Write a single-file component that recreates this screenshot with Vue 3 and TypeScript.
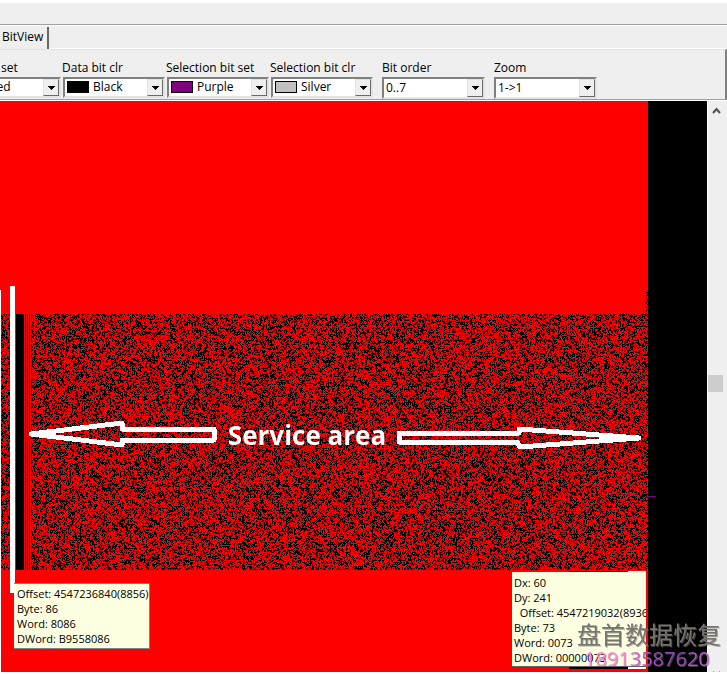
<script setup lang="ts">
import { onBeforeUnmount, onMounted, ref } from 'vue'

interface Picker {
  id: string
  label: string
  value: string
  swatch?: string
  options: string[]
}

const colours = ['Red', 'Black', 'Purple', 'Silver']

const colourPickers = ref<Picker[]>([
  { id: 'data-set', label: 'set', value: 'Red', swatch: '#ff0000', options: colours },
  { id: 'data-clr', label: 'Data bit clr', value: 'Black', swatch: '#000000', options: colours },
  { id: 'sel-set', label: 'Selection bit set', value: 'Purple', swatch: '#800080', options: colours },
  { id: 'sel-clr', label: 'Selection bit clr', value: 'Silver', swatch: '#c0c0c0', options: colours },
])

const viewPickers = ref<Picker[]>([
  { id: 'order', label: 'Bit order', value: '0..7', options: ['0..7', '7..0'] },
  { id: 'zoom', label: 'Zoom', value: '1->1', options: ['1->1', '1->2', '1->4'] },
])

const leftTip = ['Offset: 4547236840(8856)', 'Byte: 86', 'Word: 8086', 'DWord: B9558086']
const rightTip = ['Dx: 60', 'Dy: 241', '  Offset: 4547219032(8936', 'Byte: 73', 'Word: 0073', 'DWord: 00000073']

const bitmap = ref<HTMLCanvasElement | null>(null)

const MARGIN = 59
const DATA_TOP = 213
const DATA_BOTTOM = 469

function randomBits(seed: number): () => number {
  let s = seed
  return () => {
    s = (s + 0x6d2b79f5) | 0
    let t = Math.imul(s ^ (s >>> 15), 1 | s)
    t = (t + Math.imul(t ^ (t >>> 7), 61 | t)) ^ t
    return ((t ^ (t >>> 14)) >>> 0) / 4294967296
  }
}

function draw(): void {
  const el = bitmap.value
  if (!el) return
  const w = el.clientWidth
  const h = el.clientHeight
  el.width = w
  el.height = h
  const ctx = el.getContext('2d')
  if (!ctx) return
  const edge = w - MARGIN
  ctx.fillStyle = '#ff0000'
  ctx.fillRect(0, 0, edge, h)
  ctx.fillStyle = '#000000'
  ctx.fillRect(edge, 0, MARGIN, h)

  const next = randomBits(8856)
  for (let y = DATA_TOP; y < DATA_BOTTOM; y++) {
    for (let x = 1; x < edge; x++) {
      if (x >= 10 && x < 31) continue
      if (next() < 0.48) ctx.fillRect(x, y, 1, 1)
    }
  }
  // the record that starts just above the first full row
  for (let y = DATA_TOP - 22; y < DATA_TOP; y++) {
    for (let x = edge - 2; x < edge; x++) {
      if (next() < 0.55) ctx.fillRect(x, y, 1, 1)
    }
  }
  const rows = DATA_BOTTOM - DATA_TOP
  ctx.fillRect(16, DATA_TOP, 8, rows)
  for (const x of [25, 27, 29]) ctx.fillRect(x, DATA_TOP, 1, rows)
  ctx.fillStyle = '#800080'
  ctx.fillRect(edge, 395, 8, 1)
}

onMounted(() => {
  draw()
  window.addEventListener('resize', draw)
})
onBeforeUnmount(() => window.removeEventListener('resize', draw))
</script>

<template>
  <main class="window">
    <div class="strip"></div>
    <nav class="tabs"><button class="tab" type="button">BitView</button></nav>
    <section class="toolbar">
      <div class="colours">
        <div v-for="p in colourPickers" :key="p.id" class="field">
          <label :for="p.id">{{ p.label }}</label>
          <div class="combo">
            <span class="swatch" :style="{ background: p.swatch }"></span>
            <select :id="p.id" v-model="p.value" class="with-swatch">
              <option v-for="o in p.options" :key="o">{{ o }}</option>
            </select>
            <span class="drop"><svg width="7" height="4" viewBox="0 0 7 4" shape-rendering="crispEdges"><path d="M0 0h7v1h-1v1h-1v1h-1v1h-1v-1h-1v-1h-1v-1h-1z" /></svg></span>
          </div>
        </div>
      </div>
      <div v-for="p in viewPickers" :key="p.id" class="field wide">
        <label :for="p.id">{{ p.label }}</label>
        <div class="combo tall">
          <select :id="p.id" v-model="p.value">
            <option v-for="o in p.options" :key="o">{{ o }}</option>
          </select>
          <span class="drop"><svg width="7" height="4" viewBox="0 0 7 4" shape-rendering="crispEdges"><path d="M0 0h7v1h-1v1h-1v1h-1v1h-1v-1h-1v-1h-1v-1h-1z" /></svg></span>
        </div>
      </div>
    </section>
    <section class="workspace">
      <div class="view">
        <canvas ref="bitmap" class="bitmap"></canvas>
        <div class="edge"></div>
        <div class="marker"></div>
        <div class="callout">
          <svg width="190" height="32" viewBox="0 0 190 32" shape-rendering="crispEdges">
            <path d="M4 15L95 4V10H187V21H95V26Z" fill="none" stroke="#fff" stroke-width="5" stroke-linejoin="round" />
          </svg>
          <strong>Service area</strong>
          <svg width="248" height="32" viewBox="0 0 248 32" shape-rendering="crispEdges">
            <path d="M244 19L124 10V14H4V23H122L125 28Z" fill="none" stroke="#fff" stroke-width="5" stroke-linejoin="round" />
          </svg>
        </div>
        <div class="tip tip-left"><div v-for="t in leftTip" :key="t">{{ t }}</div></div>
        <div class="tip-frame">
          <div class="tip tip-right"><div v-for="t in rightTip" :key="t">{{ t }}</div></div>
        </div>
      </div>
      <div class="scrollbar">
        <button type="button" class="arrow" aria-label="Scroll up">
          <svg width="9" height="7" viewBox="0 0 9 7"><path d="M1 6L4.500 2L8 6" fill="none" stroke="#505050" stroke-width="2" /></svg>
        </button>
        <div class="thumb"></div>
        <button type="button" class="arrow down" aria-label="Scroll down">
          <svg width="9" height="7" viewBox="0 0 9 7"><path d="M1 1L4.500 5L8 1" fill="none" stroke="#505050" stroke-width="2" /></svg>
        </button>
      </div>
      <div class="watermark">
        <div class="brand">盘首数据恢复</div>
        <div class="phone">18913587620</div>
      </div>
    </section>
  </main>
</template>

<style>
body {
  margin: 0;
  background: #fff;
}
</style>

<style scoped>
.window {
  display: flex;
  flex-direction: column;
  height: 100vh;
  box-sizing: border-box;
  padding: 3px 0 2px;
  overflow: hidden;
  font-family: 'Open Sans', 'Noto Sans CJK SC', sans-serif;
  font-size: 12px;
  line-height: 15px;
  color: #000;
}
.strip {
  flex: none;
  height: 21px;
  background: #efefef;
  border-bottom: 1px solid #a0a0a0;
}
.tabs {
  flex: none;
  height: 22px;
  display: flex;
  background: #efefef;
  border-top: 1px solid #fff;
  border-bottom: 1px solid #fff;
}
.tab {
  box-sizing: border-box;
  width: 49px;
  height: 23px;
  margin: 1px 0 0;
  padding: 0 0 4px 2px;
  border: 0;
  border-right: 2px solid #696969;
  background: #efefef;
  font: inherit;
  text-align: left;
  white-space: nowrap;
}
.toolbar {
  flex: none;
  display: flex;
  gap: 9px;
  height: 51px;
  box-sizing: border-box;
  margin-bottom: 1px;
  padding-top: 10px;
  background: #efefef;
  border-top: 1px solid #e3e3e3;
  border-right: 2px solid #808080;
  border-bottom: 1px solid #a0a0a0;
  overflow: hidden;
}
.colours {
  display: flex;
  gap: 2px;
  margin-left: -41px;
}
.field {
  width: 102px;
  flex: none;
}
.field.wide {
  width: 103px;
}
.field label {
  display: block;
  height: 17px;
  white-space: nowrap;
}
.colours .field label {
  margin-left: -1px;
}
.colours .field:first-child label {
  padding-left: 43px;
}
.combo {
  position: relative;
  box-sizing: border-box;
  height: 21px;
  display: flex;
  align-items: center;
  background: #fff;
  border: 2px solid;
  border-color: #808080 #e3e3e3 #e3e3e3 #808080;
}
.combo.tall {
  height: 22px;
}
.swatch {
  position: absolute;
  left: 2px;
  top: 2px;
  width: 20px;
  height: 10px;
  border: 1px solid #000;
  pointer-events: none;
}
select {
  appearance: none;
  flex: 1;
  min-width: 0;
  height: 100%;
  margin: 0;
  padding: 0 0 1px 2px;
  border: 0;
  background: none;
  font: inherit;
  color: #000;
}
select.with-swatch {
  padding: 0 0 2px 28px;
}
.drop {
  flex: none;
  box-sizing: border-box;
  width: 16px;
  height: 100%;
  display: flex;
  align-items: center;
  justify-content: center;
  background: #efefef;
  border: 1px solid;
  border-color: #e3e3e3 #696969 #696969 #e3e3e3;
  pointer-events: none;
}
.workspace {
  position: relative;
  flex: 1;
  min-height: 0;
  display: flex;
}
.view {
  position: relative;
  flex: 1;
  min-width: 0;
  overflow: hidden;
}
.bitmap {
  display: block;
  width: 100%;
  height: 100%;
}
.edge {
  position: absolute;
  left: 0;
  top: 189px;
  bottom: 0;
  width: 1px;
  background: #fff;
}
.marker {
  position: absolute;
  left: 10px;
  top: 185px;
  width: 5px;
  height: 307px;
  background: #fff;
}
.callout {
  position: absolute;
  left: 27px;
  top: 317px;
  display: flex;
  align-items: center;
  color: #fff;
}
.callout svg {
  flex: none;
}
.callout strong {
  width: 180px;
  margin-right: -2px;
  text-align: center;
  font-family: 'Open Sans', sans-serif;
  font-size: 26px;
  font-weight: 700;
  line-height: 34px;
  white-space: nowrap;
}
.tip {
  background: #ffffe1;
  font-size: 11px;
  white-space: pre;
}
.tip-left {
  position: absolute;
  left: 14px;
  top: 482px;
  box-sizing: border-box;
  width: 136px;
  padding: 2px 3px;
  border: solid #808080;
  border-width: 1px 1px 1px 0;
}
.tip-frame {
  position: absolute;
  right: 59px;
  top: 470px;
  width: 136px;
  box-sizing: border-box;
  border-right: 2px solid #f00;
}
.tip-frame::before,
.tip-frame::after {
  content: '';
  display: block;
  height: 1px;
  margin-left: 57px;
  background: linear-gradient(90deg, #000 59px, #fff 59px);
}
.tip-frame::after {
  height: 2px;
}
.tip-right {
  padding: 3px 0 1px 2px;
  border-bottom: 1px solid #606060;
  overflow: hidden;
}
.scrollbar {
  flex: none;
  display: flex;
  flex-direction: column;
  width: 20px;
  box-sizing: border-box;
  border-left: 1px solid #fff;
  background: #efefef;
  overflow: hidden;
}
.arrow {
  flex: none;
  display: flex;
  align-items: center;
  justify-content: center;
  width: 16px;
  height: 18px;
  padding: 0;
  border: 0;
  background: none;
}
.arrow.down {
  margin-top: auto;
  margin-bottom: -11px;
}
.thumb {
  flex: none;
  width: 15px;
  height: 17px;
  margin-top: 256px;
  background: #cdcdcd;
}
.watermark {
  position: absolute;
  right: 3px;
  bottom: 2px;
  width: 147px;
  pointer-events: none;
  white-space: nowrap;
}
.brand {
  font-family: 'Noto Sans CJK SC', sans-serif;
  font-size: 24px;
  line-height: 28px;
  color: #77736f;
  text-shadow: 1px 1px 0 rgba(120, 116, 110, 0.6);
}
.phone {
  width: 127px;
  margin-left: 7px;
  font-size: 20px;
  font-weight: 500;
  line-height: 22px;
  color: transparent;
  background: linear-gradient(90deg, #ff86dc 40px, #b050c8 60px, #8a48b8 90px, #d060d8);
  background-clip: text;
  filter: drop-shadow(1px 1px 0 rgba(110, 100, 110, 0.6));
}
</style>
